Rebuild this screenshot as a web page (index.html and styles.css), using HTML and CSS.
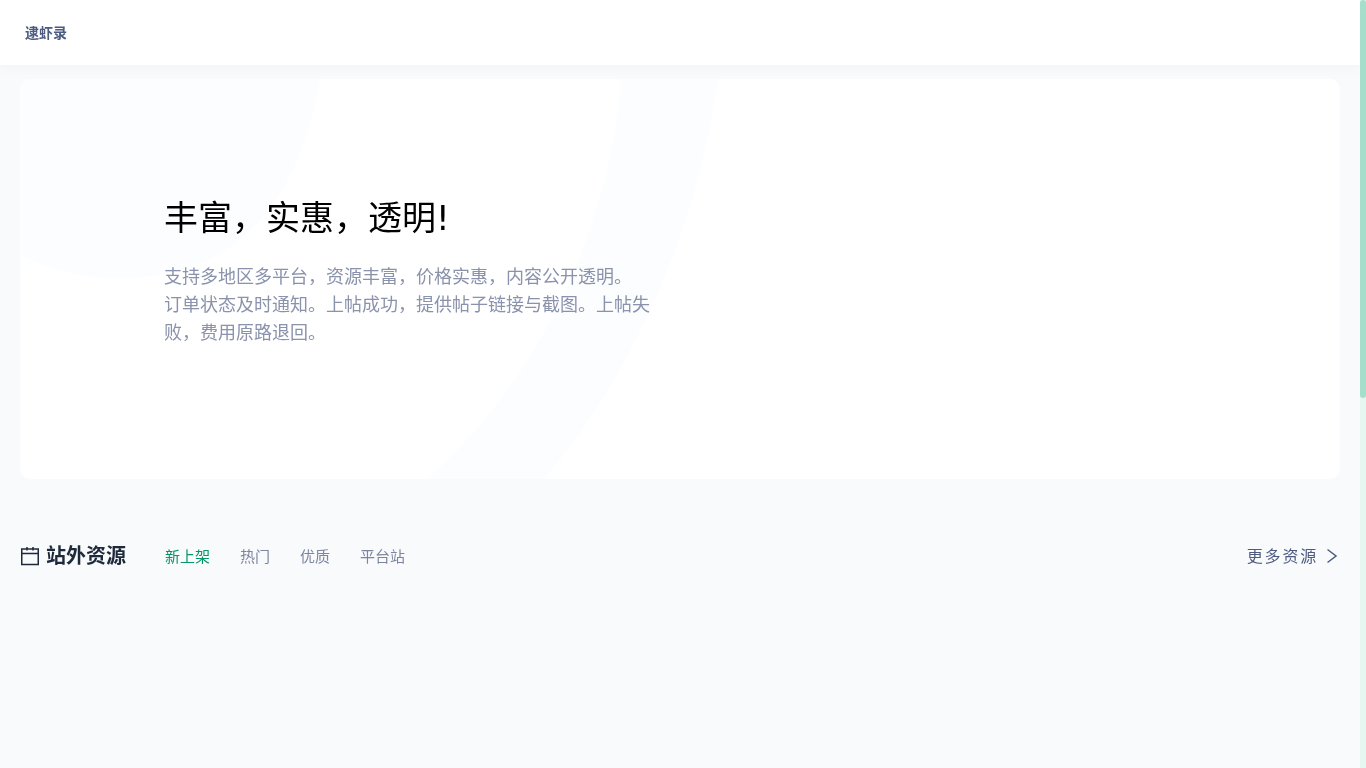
FILE: index.html
```html
<!DOCTYPE html>
<html lang="zh-CN">
<head>
<meta charset="utf-8">
<title>逮虾录</title>
<link rel="stylesheet" href="styles.css">
</head>
<body>
<div class="app">
  <header class="topbar"><a class="logo">逮虾录</a></header>
  <main class="page">
    <section class="hero">
      <svg class="hero-bg" viewBox="0 0 1320 400" preserveAspectRatio="none" aria-hidden="true">
        <path class="blob" d="M0 0H300C285 90 240 199 100 199C60 199 30 190 0 176Z"/>
        <path class="blob" d="M601 0H698C678 150 610 300 524 400H407C520 300 590 150 601 0Z"/>
      </svg>
      <div class="hero-copy">
        <h1>丰富，实惠，透明!</h1>
        <p>支持多地区多平台，资源丰富，价格实惠，内容公开透明。<br>订单状态及时通知。上帖成功，提供帖子链接与截图。上帖失败，费用原路退回。</p>
      </div>
    </section>
    <section class="resources">
      <div class="section-head">
        <svg class="cal" viewBox="0 0 20 20" fill="none" stroke="currentColor" stroke-width="1.5" aria-hidden="true">
          <rect x="1.75" y="2" width="16.5" height="15.5"/>
          <path d="M1.75 6.5H18.25M7 0V3.5M13 0V3.5"/>
        </svg>
        <h2>站外资源</h2>
        <nav class="tabs">
          <a class="tab active">新上架</a>
          <a class="tab">热门</a>
          <a class="tab">优质</a>
          <a class="tab">平台站</a>
        </nav>
        <a class="more">更多资源
          <svg class="chev" viewBox="0 0 12 16" fill="none" stroke="currentColor" stroke-width="1.5" aria-hidden="true"><path d="M1.5 1.5L10 8L1.5 14.5"/></svg>
        </a>
      </div>
    </section>
  </main>
</div>
<div class="scrollbar"><div class="scrollbar-thumb"></div></div>
</body>
</html>
```
FILE: styles.css
```css
* { box-sizing: border-box; }
html, body { height: 100%; }
body {
  margin: 0;
  background: #f9fafc;
  font-family: "DejaVu Sans", "Noto Sans CJK SC", sans-serif;
  overflow: hidden;
}
.app { width: 1360px; }
.topbar {
  height: 65px;
  padding: 0 25px;
  display: flex;
  align-items: center;
  background: #fff;
  box-shadow: 0 2px 12px rgba(30, 41, 59, 0.04);
  position: relative;
}
.logo { font-size: 14px; font-weight: 700; color: #4d5b83; margin-bottom: 2px; will-change: transform; }
.page { padding: 14px 20px 0; }
.hero {
  height: 400px;
  background: #fff;
  border-radius: 10px;
  position: relative;
  overflow: hidden;
  display: flex;
  align-items: center;
  padding: 0 0 18px 144px;
}
.hero-bg { position: absolute; inset: 0; width: 100%; height: 100%; }
.blob { fill: #fcfdfe; }
.hero-copy { position: relative; width: 490px; will-change: transform; }
h1 { margin: 0 0 21px; padding-top: 1px; font-size: 34px; line-height: 48px; font-weight: 400; color: #000; }
.hero-copy p { margin: 0; font-size: 18px; line-height: 28px; color: #8a92ac; }
.resources { margin-top: 60px; }
.section-head { display: flex; align-items: center; height: 36px; will-change: transform; }
.cal { width: 20px; height: 20px; color: #1e293b; margin-right: 6px; }
h2 { margin: 0 0 2px; font-size: 20px; line-height: 28px; font-weight: 700; color: #1e293b; }
.tabs { display: flex; gap: 30px; margin-left: 39px; }
.tab { font-size: 15px; line-height: 22px; color: #7c86a0; }
.tab.active { color: #059669; }
.more { margin-left: auto; margin-bottom: 5px; display: flex; align-items: center; gap: 8px; font-size: 16px; letter-spacing: 1.8px; color: #4d5b83; }
.chev { width: 12px; height: 16px; margin: 2px 2px 0 0; }
.scrollbar { position: fixed; top: 0; right: 0; bottom: 0; width: 6px; background: #e6f6f1; }
.scrollbar-thumb { height: 398px; background: #a5dfcb; border-radius: 3px; }
```
